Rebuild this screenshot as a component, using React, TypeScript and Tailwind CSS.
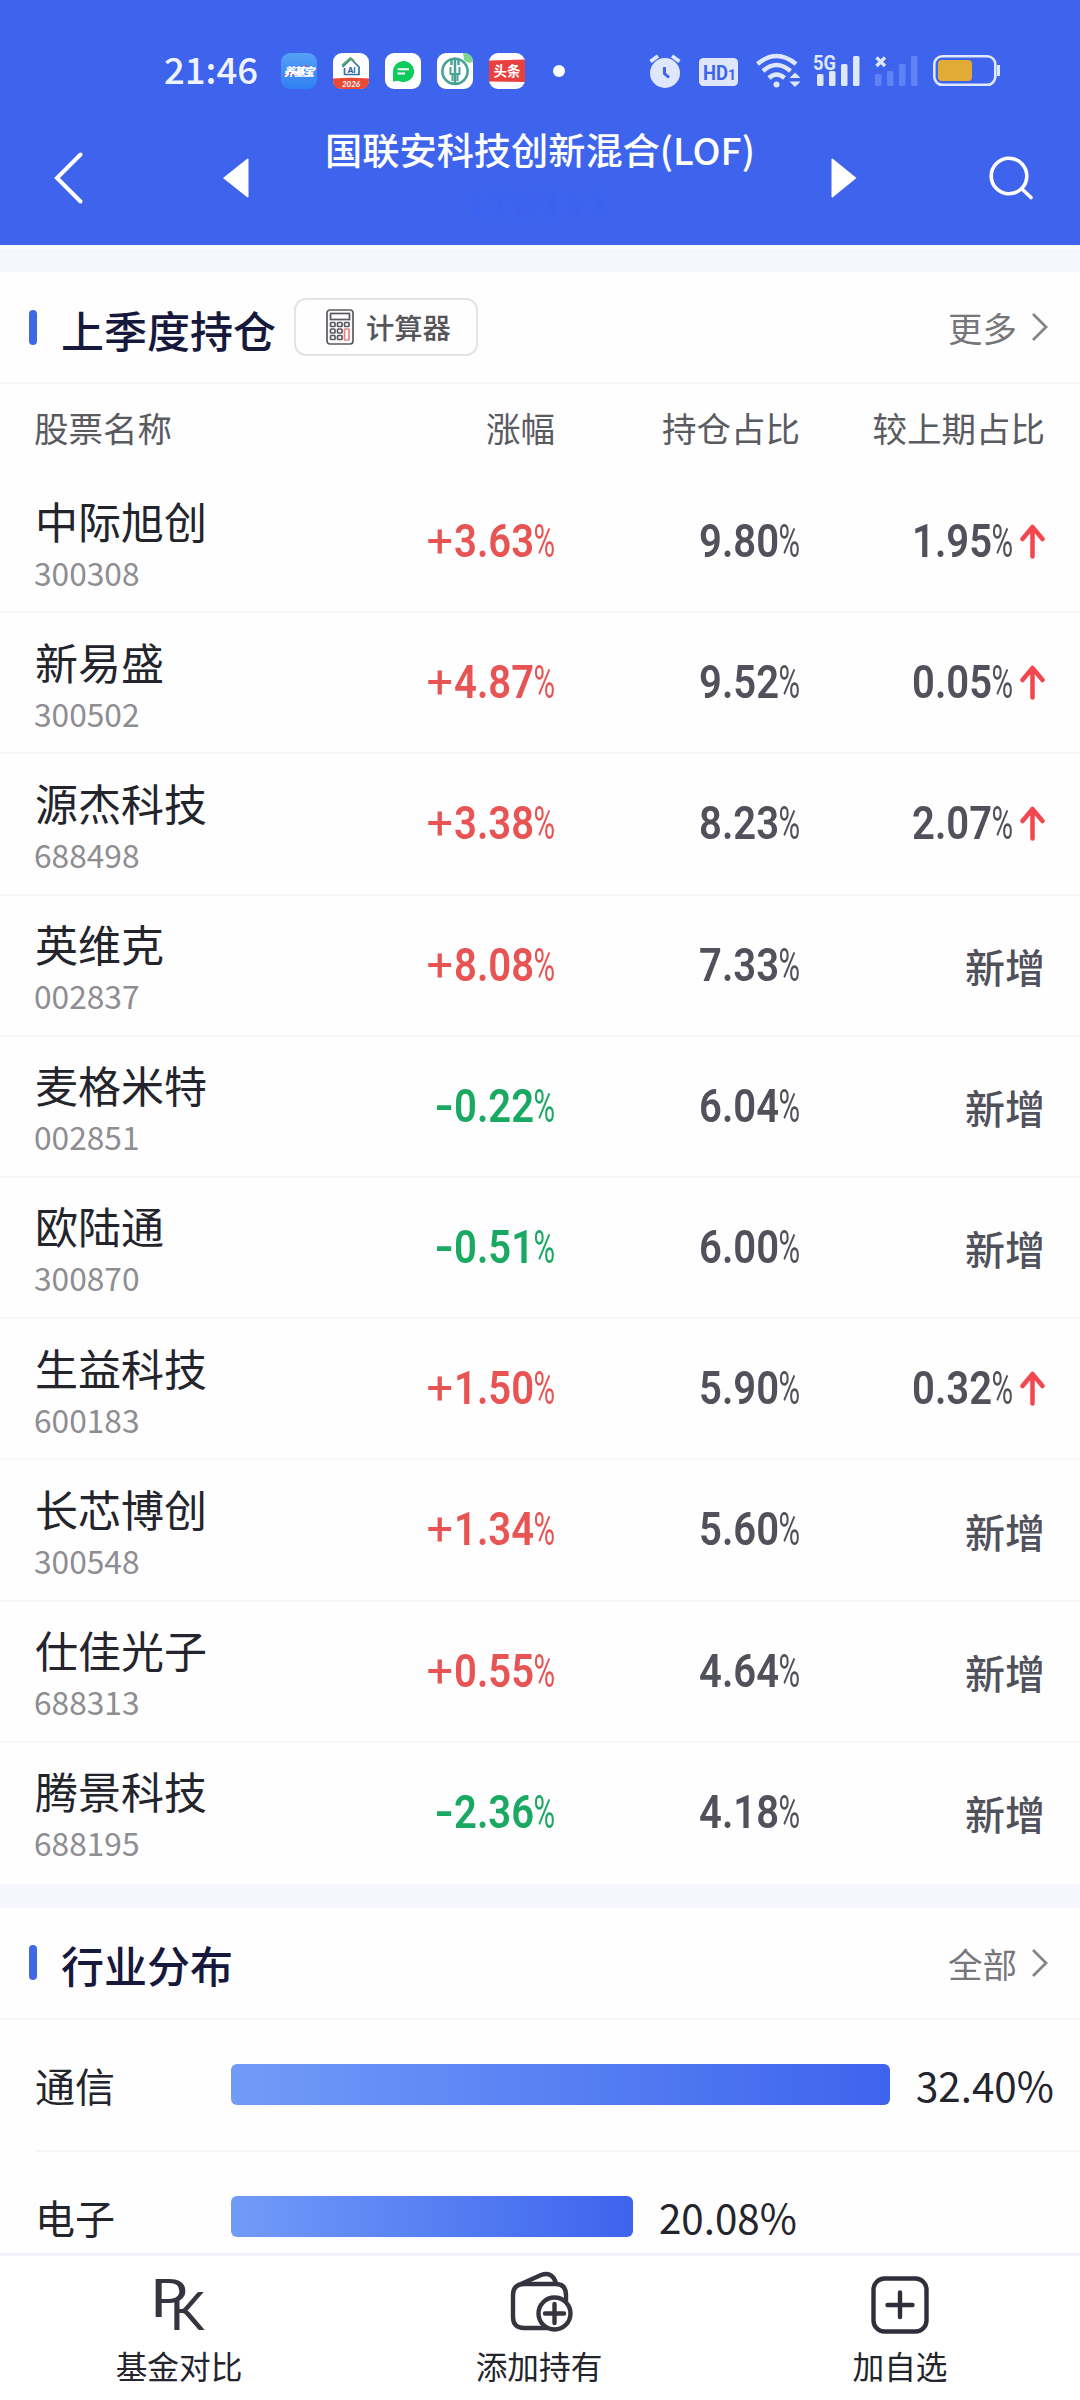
import React from 'react';

interface Holding {
  name: string;
  code: string;
  change: string;
  ratio: string;
  // percentage delta against last quarter, undefined for newly added positions
  delta?: string;
}

const HOLDINGS: Holding[] = [
  { name: '中际旭创', code: '300308', change: '+3.63', ratio: '9.80', delta: '1.95' },
  { name: '新易盛', code: '300502', change: '+4.87', ratio: '9.52', delta: '0.05' },
  { name: '源杰科技', code: '688498', change: '+3.38', ratio: '8.23', delta: '2.07' },
  { name: '英维克', code: '002837', change: '+8.08', ratio: '7.33' },
  { name: '麦格米特', code: '002851', change: '-0.22', ratio: '6.04' },
  { name: '欧陆通', code: '300870', change: '-0.51', ratio: '6.00' },
  { name: '生益科技', code: '600183', change: '+1.50', ratio: '5.90', delta: '0.32' },
  { name: '长芯博创', code: '300548', change: '+1.34', ratio: '5.60' },
  { name: '仕佳光子', code: '688313', change: '+0.55', ratio: '4.64' },
  { name: '腾景科技', code: '688195', change: '-2.36', ratio: '4.18' },
];

const INDUSTRIES = [
  { name: '通信', value: '32.40%', width: 659 },
  { name: '电子', value: '20.08%', width: 402 },
];

function AppIcons() {
  return (
    <div className="flex gap-4">
      <svg width="36" height="36" viewBox="0 0 36 36">
        <defs>
          <linearGradient id="yjb" x1="0" y1="0" x2="0" y2="1">
            <stop offset="0" stopColor="#55a0f8" />
            <stop offset="1" stopColor="#2f80f3" />
          </linearGradient>
        </defs>
        <rect width="36" height="36" rx="9" fill="url(#yjb)" />
        <path d="M3 23 L9 19 L12 22 L19 16 L26 12.500" stroke="#d9486b" strokeWidth="1.500" fill="none" />
        <text x="18" y="22.500" textAnchor="middle" fontSize="11.500" fontWeight="900" fontStyle="italic" fontFamily="Noto Sans CJK SC" fill="#fff" textLength="31">养基宝</text>
      </svg>
      <svg width="36" height="36" viewBox="0 0 36 36">
        <rect width="36" height="36" rx="9" fill="#fff" />
        <path d="M0 25.500 Q18 24 36 25.500 V27 Q36 36 27 36 H9 Q0 36 0 27 Z" fill="#ea4a33" />
        <path d="M9.500 14 L18 6 L26 14 V21.500 H11.500 V15" fill="none" stroke="#2d72a8" strokeWidth="1.700" strokeLinejoin="round" />
        <path d="M9 12.500 L17.500 5 L21 8" fill="none" stroke="#4fae5b" strokeWidth="2" />
        <text x="18.500" y="20" textAnchor="middle" fontSize="8" fontWeight="700" fontFamily="Inter" fill="#2a5d9f">AI</text>
        <text x="18" y="33.500" textAnchor="middle" fontSize="8" fontWeight="700" fontStyle="italic" fontFamily="Lato" fill="#fff">2026</text>
      </svg>
      <svg width="36" height="36" viewBox="0 0 36 36">
        <rect width="36" height="36" rx="9" fill="#fff" />
        <path d="M18 8 A11 10.500 0 1 1 13 27.800 L8 28.500 V18.500 A10.500 10.500 0 0 1 18 8 Z" fill="#0ccb5c" />
        <path d="M12.500 16.300 H24 M12.500 20.500 H20" stroke="#fff" strokeWidth="1.900" />
      </svg>
      <svg width="36" height="36" viewBox="0 0 36 36">
        <rect width="36" height="36" rx="9" fill="#fff" />
        <path d="M26 0 H28 Q36 1 36 9 Q30 11 27 7 Z" fill="#7ed491" />
        <circle cx="18" cy="18.300" r="12.600" fill="none" stroke="#4aa295" strokeWidth="2.600" />
        <path d="M18 4.500 V31 M14.500 6 V12 M21.500 6 V12" stroke="#4aa295" strokeWidth="2.500" />
        <path d="M13.500 14 V21 H22.500 V14 M15.500 21 V28 M20.500 21 V28" stroke="#4aa295" strokeWidth="2" fill="none" />
      </svg>
      <svg width="36" height="36" viewBox="0 0 36 36">
        <rect width="36" height="36" rx="9" fill="#fff" />
        <path d="M0 7.500 L36 6.500 V29 L0 28.500 Z" fill="#e8403f" />
        <text x="18" y="23" textAnchor="middle" fontSize="13.500" fontWeight="700" fontFamily="Noto Sans CJK SC" fill="#fff">头条</text>
      </svg>
    </div>
  );
}

function StatusBar() {
  return (
    <div className="flex h-[111px] items-start pt-[53px]">
      <div className="ml-[164px] w-[117px] text-[36.500px] leading-[32px] font-medium text-[#eef3ff]">21:46</div>
      <AppIcons />
      <div className="mt-3 ml-[28px] size-3 rounded-full bg-white" />
      <div className="ml-[83px] flex text-[#dfe7fd]">
        <svg width="34" height="36" viewBox="0 0 34 36" fill="currentColor">
          <circle cx="17" cy="20" r="15" />
          <path d="M2.500 8.500 L10 3 M24 3 L31.500 8.500" stroke="currentColor" strokeWidth="3.600" />
          <path d="M16.500 14 V20.500 L21 24.500" stroke="#3e64ee" strokeWidth="3" fill="none" />
        </svg>
        <svg className="ml-[17px]" width="40" height="36" viewBox="0 0 40 36" fill="currentColor">
          <rect x="0" y="5" width="39" height="28" rx="4.500" />
          <text x="4" y="26.500" fontSize="21" fontWeight="700" fontFamily="Roboto" fill="#3e64ee" textLength="25" lengthAdjust="spacingAndGlyphs">HD</text>
          <text x="29" y="26.500" fontSize="14" fontWeight="700" fontFamily="Roboto" fill="#3e64ee">1</text>
        </svg>
        <svg className="ml-[17px]" width="46" height="36" viewBox="0 0 46 36" fill="none" stroke="currentColor" strokeWidth="4.500">
          <path d="M1.500 11 Q20.500 -5 40 11" />
          <path d="M7 18 Q20.500 6 34.500 18" />
          <path d="M13 25 Q20.500 18 28.500 25" />
          <circle cx="20.500" cy="31.500" r="3" fill="currentColor" stroke="none" />
          <path d="M33.500 25 L39 19.500 L44.500 25 Z M33.500 28.500 L39 34 L44.500 28.500 Z" fill="currentColor" stroke="none" />
        </svg>
        <svg className="-mt-[8px] ml-[11px]" width="48" height="44" viewBox="0 -8 48 44" fill="currentColor">
          <text x="0" y="16.500" fontSize="21" fontWeight="700" fontFamily="Roboto" textLength="23" lengthAdjust="spacingAndGlyphs">5G</text>
          <rect x="4" y="21" width="6.500" height="12" rx="1.500" />
          <rect x="16" y="18" width="6.500" height="15" rx="1.500" />
          <rect x="28" y="11" width="6.500" height="22" rx="1.500" />
          <rect x="40" y="3" width="6.500" height="30" rx="1.500" />
        </svg>
        <svg className="ml-[13px]" width="46" height="36" viewBox="0 0 46 36" fill="#5f82f6">
          <path d="M2.500 4.500 L11 13 M11 4.500 L2.500 13" stroke="#dfe7fd" strokeWidth="3.200" />
          <rect x="1" y="21" width="6.500" height="12" rx="1.500" />
          <rect x="13" y="18" width="6.500" height="15" rx="1.500" />
          <rect x="25" y="11" width="6.500" height="22" rx="1.500" />
          <rect x="37" y="3" width="6.500" height="30" rx="1.500" />
        </svg>
        <svg className="ml-[13px]" width="68" height="36" viewBox="0 0 68 36" fill="none">
          <rect x="1.300" y="3.300" width="61" height="28.500" rx="8" stroke="currentColor" strokeWidth="2.600" />
          <rect x="5" y="7" width="34" height="21" rx="4" fill="#e2ab35" />
          <path d="M65.500 12 V23" stroke="currentColor" strokeWidth="3" />
        </svg>
      </div>
    </div>
  );
}

function NavBar() {
  return (
    <div className="flex h-[134px] items-center pr-[46px] pl-[54px] text-white">
      <svg width="29" height="52" viewBox="0 0 29 52" fill="none" stroke="currentColor" strokeWidth="4" strokeLinecap="round">
        <path d="M26.500 2.500 L3 26 L26.500 49.500" />
      </svg>
      <svg className="ml-[140px]" width="26" height="40" viewBox="0 0 26 40" fill="currentColor">
        <path d="M0 20 L24.500 0.500 Q25.500 0.500 25.500 1.500 V38.500 Q25.500 39.500 24.500 39.500 Z" />
      </svg>
      <div className="flex flex-1 flex-col items-center pb-[2px]">
        <div className="text-[37.200px] leading-[56px] font-medium">国联安科技创新混合(LOF)</div>
        <svg className="blur-[2.500px]" width="138" height="56" viewBox="0 0 138 56" fill="none" stroke="#3659f4" strokeWidth="6">
          <path d="M8 16 Q0 28 8 40 M22 20 L32 18 L26 38 M42 20 H54 L46 40 M64 18 L60 38 M74 20 Q90 16 80 28 Q90 36 74 38 M98 20 L108 36 M124 16 Q132 28 126 38" opacity=".35" />
        </svg>
      </div>
      <svg width="26" height="40" viewBox="0 0 26 40" fill="currentColor">
        <path d="M25.500 20 L1.500 0.500 Q0.500 0.500 0.500 1.500 V38.500 Q0.500 39.500 1.500 39.500 Z" />
      </svg>
      <svg className="ml-[132px]" width="45" height="44" viewBox="0 0 45 44" fill="none" stroke="currentColor" strokeWidth="3.600" strokeLinecap="round">
        <circle cx="20" cy="20" r="17.800" />
        <path d="M33 33 L42 41.500" />
      </svg>
    </div>
  );
}

function CalculatorIcon() {
  const keys = [[4.5, 13.5], [11.5, 13.5], [18.5, 13.5], [4.5, 20], [11.5, 20], [4.5, 26.5], [11.5, 26.5]];
  return (
    <svg width="28" height="36" viewBox="0 0 28 36" fill="none" stroke="#5b5960" strokeWidth="1.700">
      <rect x="1" y="1" width="26" height="34" rx="3" />
      <rect x="4.500" y="4.500" width="19" height="6" />
      {keys.map(([x, y]) => (
        <rect key={`${x}-${y}`} x={x} y={y} width="4.500" height="4" rx="0.800" />
      ))}
      <rect x="18.500" y="20" width="4.500" height="11" rx="0.800" stroke="#ee7f80" />
    </svg>
  );
}

function SectionHeader({ title, action, children }: { title: string; action: string; children?: React.ReactNode }) {
  return (
    <div className="flex h-[112px] items-center border-b-2 border-[#f7f7f9] pr-[31px] pl-[29px]">
      <div className="h-[35px] w-[8px] rounded-full bg-[#4068e6]" />
      <h2 className="ml-6 pt-[3px] text-[43px] leading-[60px] font-medium text-[#16183c]">{title}</h2>
      {children}
      <div className="ml-auto text-[34.500px] leading-[50px] text-[#77777b]">{action}</div>
      <svg className="ml-[14px]" width="18" height="30" viewBox="0 0 18 30" fill="none" stroke="#85858a" strokeWidth="2.800">
        <path d="M2 2 L15 15 L2 28" />
      </svg>
    </div>
  );
}

// Condensed figures: sign, digits and a slim percent mark
function Figure({ value }: { value: string }) {
  const sign = /^[+-]/.test(value) ? value[0] : '';
  return (
    <span className="flex justify-end font-[Roboto] text-[46px] leading-[56px] font-semibold">
      {sign === '+' && <span className="-mr-[21px] origin-right scale-x-[1.02] font-normal">+</span>}
      {sign === '-' && <span className="-mr-[22px] origin-right scale-x-[1.15] font-semibold">-</span>}
      <span className="flex w-[102px] origin-right scale-x-[0.87] justify-end">{value.slice(sign.length)}</span>
      <span className="flex w-[21px] origin-right scale-x-[0.64] justify-end font-normal">%</span>
    </span>
  );
}

function UpArrow() {
  return (
    <svg className="ml-[7px]" width="25" height="36" viewBox="0 0 25 36" fill="none" stroke="#f2474f" strokeWidth="4.500" strokeLinecap="round" strokeLinejoin="round">
      <path d="M12.500 32.500 V3.500 M2.500 15 L12.500 3 L22.500 15" />
    </svg>
  );
}

function HoldingRow({ item }: { item: Holding }) {
  return (
    <div className="grid h-[141.200px] grid-cols-[271px_250px_245px_245px] border-b-2 border-[#f8f8fa] px-[34px] text-right text-[#50515b] last:border-transparent">
      <div className="pt-[21.500px] text-left">
        <div className="pl-px text-[43px] leading-[52px] text-[#23242c]">{item.name}</div>
        <div className="text-[31.700px] leading-[52px] text-[#8d8d92]">{item.code}</div>
      </div>
      <div className={item.change.startsWith('+') ? 'pt-[41px] text-[#e85353]' : 'pt-[41px] text-[#1aa963]'}>
        <Figure value={item.change} />
      </div>
      <div className="pt-[41px]">
        <Figure value={item.ratio} />
      </div>
      {item.delta ? (
        <div className="flex justify-end pt-[41px]">
          <Figure value={item.delta} />
          <div className="pt-[11px]"><UpArrow /></div>
        </div>
      ) : (
        <div className="pt-[42.500px] text-[40px] leading-[56px] font-[450]">新增</div>
      )}
    </div>
  );
}

function IndustryRow({ name, value, width }: { name: string; value: string; width: number }) {
  return (
    <div className="ml-[35px] flex h-[132px] items-center border-b-2 border-[#f7f7f9] text-[40px] leading-[56px] text-[#23242c]">
      <div className="w-[196px] pt-px">{name}</div>
      <div className="h-[41px] rounded-[6px] bg-linear-to-r from-[#729bf8] to-[#3e63ed]" style={{ width }} />
      <div className="ml-[26px] pt-px text-[40.300px]">{value}</div>
    </div>
  );
}

function BottomBar() {
  return (
    <div className="grid h-[147px] grid-cols-3 border-t-[3px] border-[#f2f3fa] bg-white text-center text-[31.700px] leading-[46px] text-[#23242c]">
      <div className="flex flex-col items-center pt-[4px] pr-[2px]">
        <svg width="60" height="82" viewBox="0 -10 60 82" fill="#34353e" fontFamily="Lato">
          <defs>
            {/* the K's stem starts below the bowl of the P */}
            <clipPath id="pk-stem">
              <path d="M22 29 H34 L48 18 H60 V64 H22 Z" />
            </clipPath>
          </defs>
          <text transform="translate(1 47) scale(1.17 1)" fontSize="53">P</text>
          <g clipPath="url(#pk-stem)">
            <text transform="translate(20.500 59.500)" fontSize="53">K</text>
          </g>
        </svg>
        <div>基金对比</div>
      </div>
      <div className="flex flex-col items-center pt-[14px] pr-[2px]">
        <svg className="ml-[6px]" width="64" height="66" viewBox="0 0 64 66" fill="none" stroke="#34353e" strokeWidth="4.400" strokeLinejoin="round">
          <path d="M37 58 H14 Q3 58 3 47 V25 Q3 14 14 14 H46 Q56 14 56 25 V32" />
          <path d="M11 14 L31 5 Q42 1 46 13" />
          <circle cx="44.500" cy="43.500" r="16" fill="#fff" />
          <path d="M44.500 34 V53 M35 43.500 H54" strokeLinecap="round" />
        </svg>
        <div className="mt-[6px]">添加持有</div>
      </div>
      <div className="flex flex-col items-center pt-[14px]">
        <svg width="58" height="66" viewBox="0 0 58 66" fill="none" stroke="#2e2f3a" strokeWidth="4.400" strokeLinecap="round">
          <rect x="2.500" y="8.500" width="53" height="53" rx="11" />
          <path d="M29 22.500 V47 M16.500 35 H41.500" />
        </svg>
        <div className="mt-[6px]">加自选</div>
      </div>
    </div>
  );
}

export default function App() {
  return (
    <div className="flex h-[2400px] w-[1080px] flex-col overflow-hidden bg-[#fefefe] font-['Noto_Sans_CJK_SC',sans-serif]">
      <header className="h-[245px] shrink-0 bg-[#3e64ee]">
        <StatusBar />
        <NavBar />
      </header>

      <main className="min-h-0 flex-1 overflow-hidden">
        <div className="h-[27px] border-t-4 border-[#fafcff] bg-[#f6f7fc]" />
        <section>
          <SectionHeader title="上季度持仓" action="更多">
            <button className="ml-[18px] flex h-[58px] w-[184px] items-center rounded-[12px] border-2 border-[#e4e4e6] pl-[30px] text-[28.300px] leading-[40px] font-medium text-[#55555a]">
              <CalculatorIcon />
              <span className="ml-[12px]">计算器</span>
            </button>
          </SectionHeader>
          <div className="grid h-[88px] grid-cols-[271px_250px_245px_245px] items-center px-[34px] text-right text-[34.500px] text-[#5a5b61]">
            <div className="text-left">股票名称</div>
            <div>涨幅</div>
            <div>持仓占比</div>
            <div className="whitespace-nowrap">较上期占比</div>
          </div>
          <div>
            {HOLDINGS.map(item => (
              <HoldingRow key={item.code} item={item} />
            ))}
          </div>
        </section>

        <div className="h-[24px] bg-[#f6f7fc]" />
        <section>
          <SectionHeader title="行业分布" action="全部" />
          {INDUSTRIES.map(item => (
            <IndustryRow key={item.name} {...item} />
          ))}
        </section>
      </main>

      <BottomBar />
    </div>
  );
}
